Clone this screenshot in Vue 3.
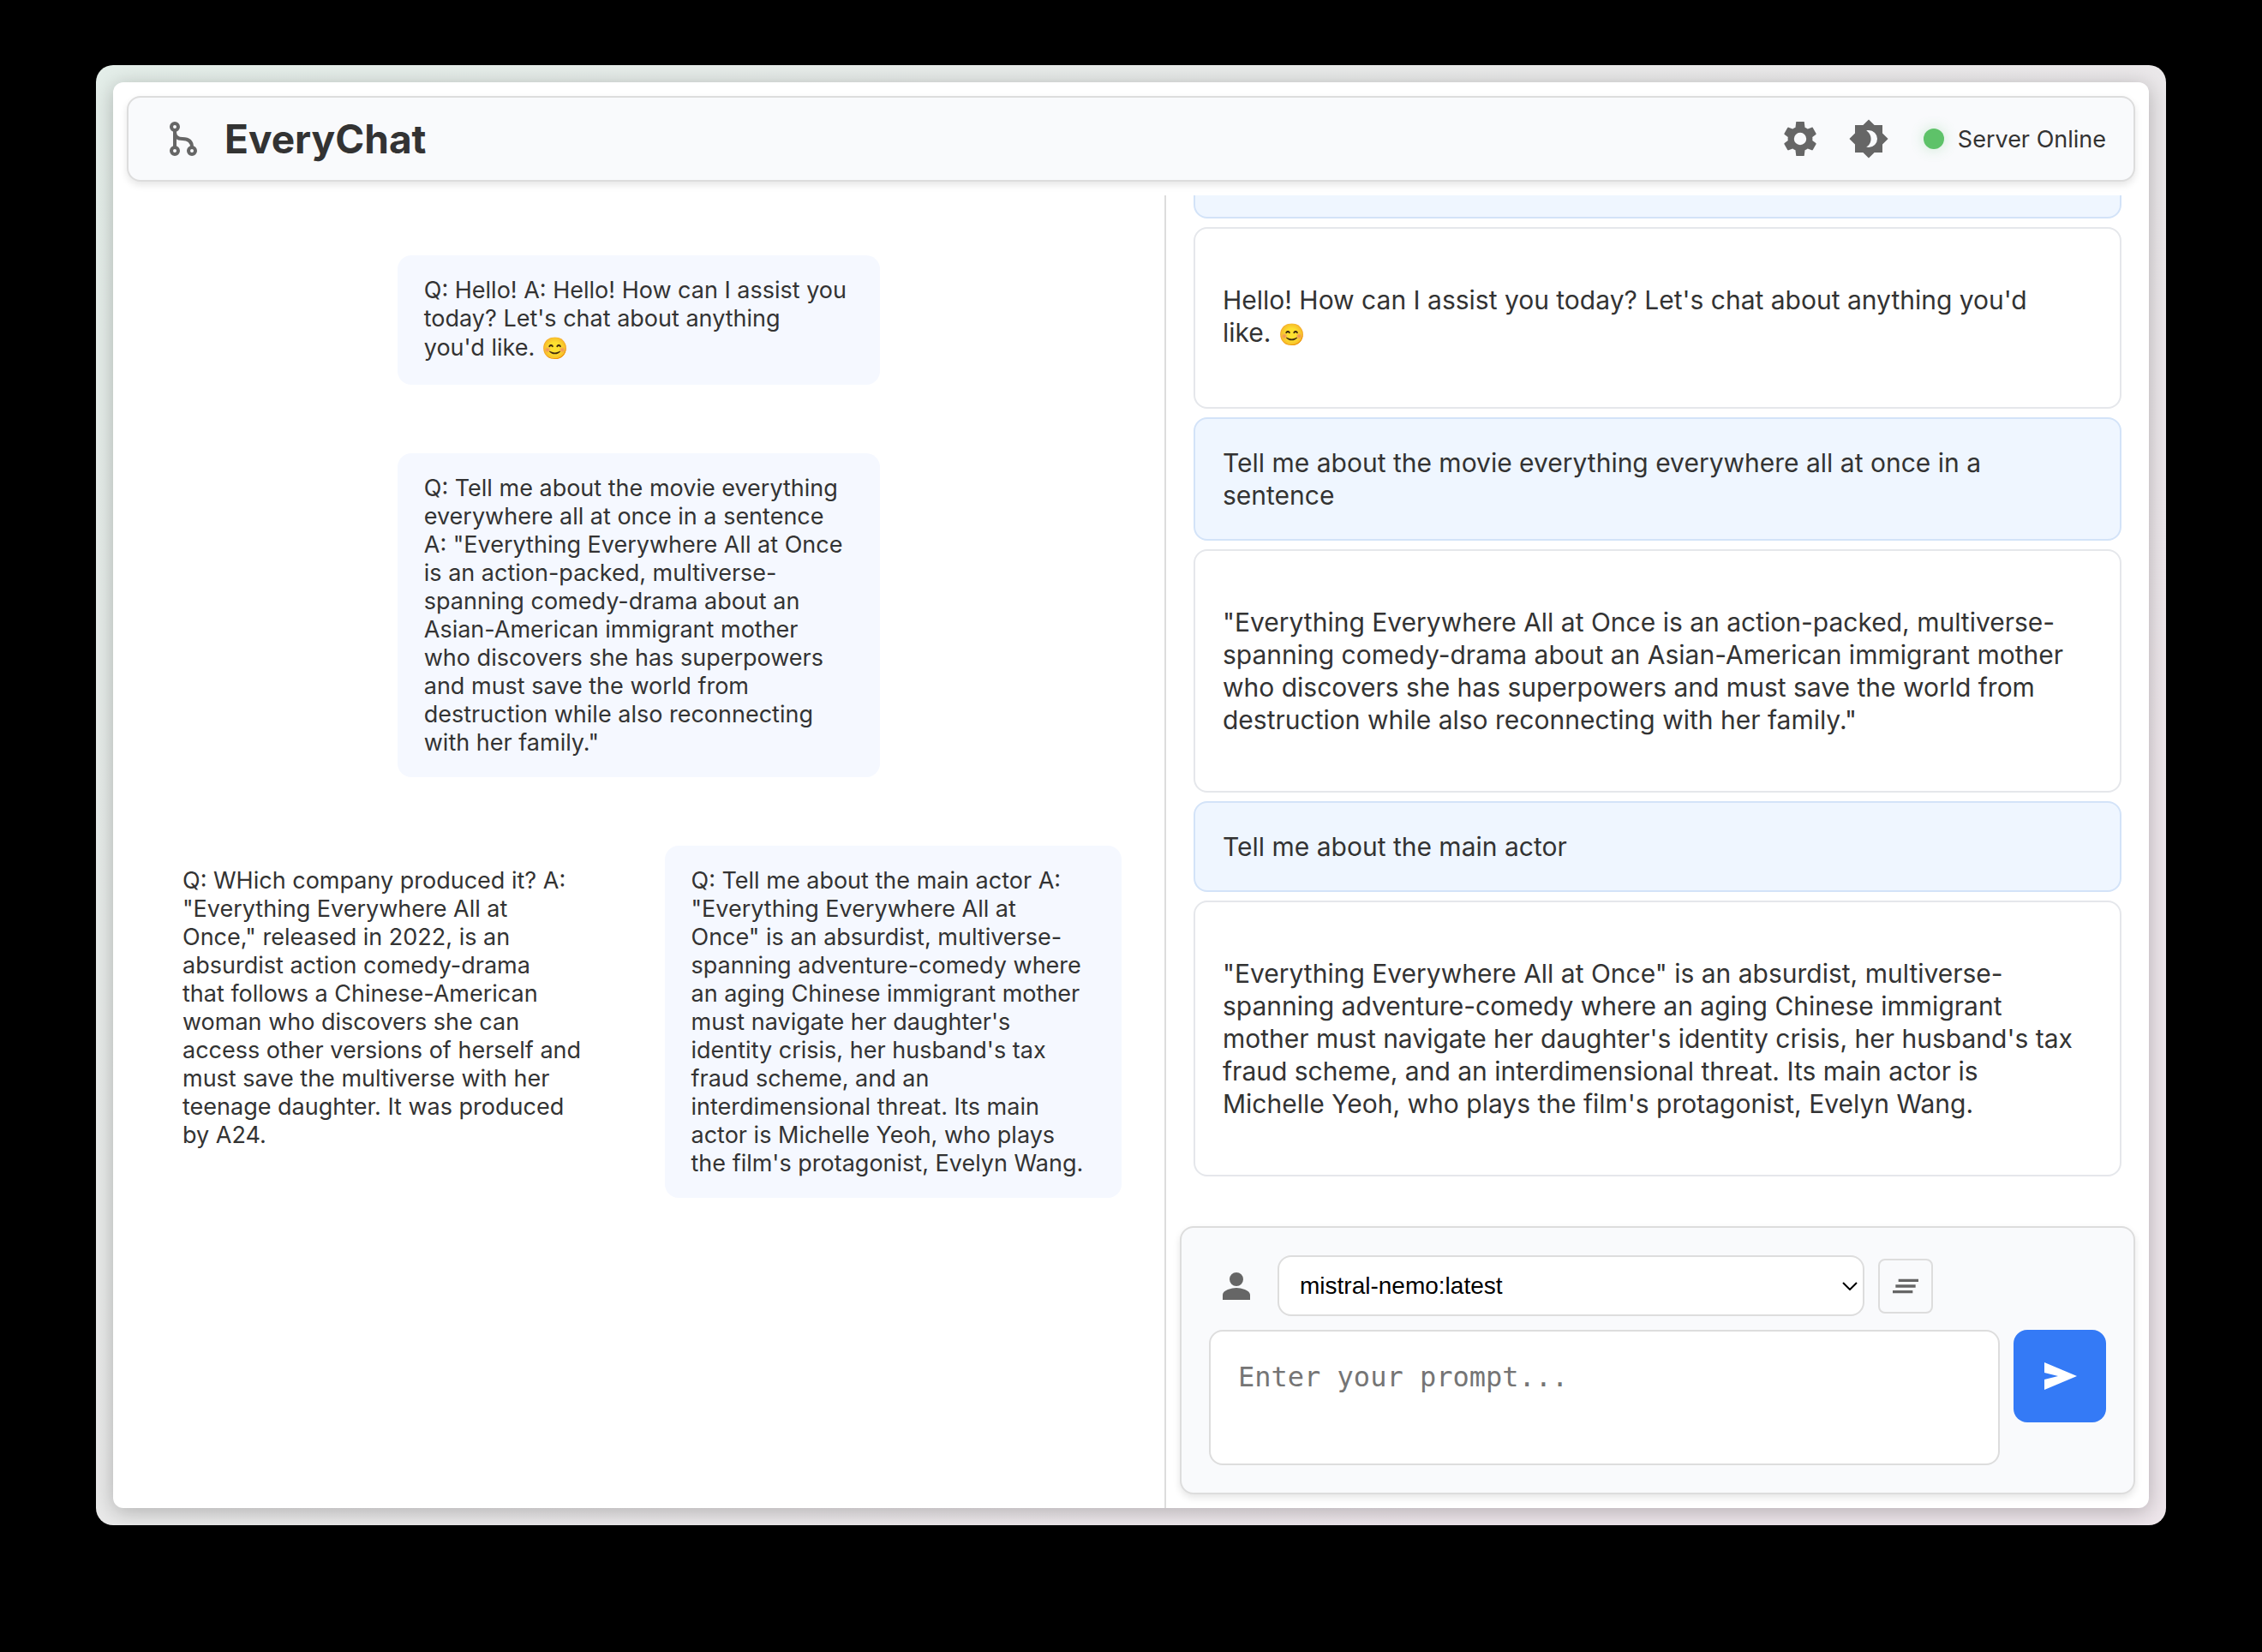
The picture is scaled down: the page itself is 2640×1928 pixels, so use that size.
<script setup>
import { ref } from 'vue'

const model = ref('mistral-nemo:latest')
const prompt = ref('')

const helloNode = `Q: Hello! A: Hello! How can I assist you
today? Let's chat about anything
you'd like. `

const movieNode = `Q: Tell me about the movie everything
everywhere all at once in a sentence
A: "Everything Everywhere All at Once
is an action-packed, multiverse-
spanning comedy-drama about an
Asian-American immigrant mother
who discovers she has superpowers
and must save the world from
destruction while also reconnecting
with her family."`

const companyNode = `Q: WHich company produced it? A:
"Everything Everywhere All at
Once," released in 2022, is an
absurdist action comedy-drama
that follows a Chinese-American
woman who discovers she can
access other versions of herself and
must save the multiverse with her
teenage daughter. It was produced
by A24.`

const actorNode = `Q: Tell me about the main actor A:
"Everything Everywhere All at
Once" is an absurdist, multiverse-
spanning adventure-comedy where
an aging Chinese immigrant mother
must navigate her daughter's
identity crisis, her husband's tax
fraud scheme, and an
interdimensional threat. Its main
actor is Michelle Yeoh, who plays
the film's protagonist, Evelyn Wang.`

const messages = [
  { role: 'user', text: 'Hello!' },
  {
    role: 'bot',
    text: `Hello! How can I assist you today? Let's chat about anything you'd
like. `,
    emoji: '😊',
  },
  {
    role: 'user',
    text: `Tell me about the movie everything everywhere all at once in a
sentence`,
  },
  {
    role: 'bot',
    text: `"Everything Everywhere All at Once is an action-packed, multiverse-
spanning comedy-drama about an Asian-American immigrant mother
who discovers she has superpowers and must save the world from
destruction while also reconnecting with her family."`,
  },
  { role: 'user', text: 'Tell me about the main actor' },
  {
    role: 'bot',
    text: `"Everything Everywhere All at Once" is an absurdist, multiverse-
spanning adventure-comedy where an aging Chinese immigrant
mother must navigate her daughter's identity crisis, her husband's tax
fraud scheme, and an interdimensional threat. Its main actor is
Michelle Yeoh, who plays the film's protagonist, Evelyn Wang.`,
  },
]
</script>

<template>
  <div class="desktop">
    <div class="window">
      <div class="app">
        <header class="bar">
          <div class="group">
            <button class="icon-button" type="button" aria-label="Branches">
              <svg viewBox="0 0 48 48" fill="none" stroke="currentColor" stroke-width="4">
                <circle cx="14" cy="10" r="4" />
                <circle cx="14" cy="38" r="4" />
                <circle cx="34" cy="38" r="4" />
                <path d="M14 14v20M14 16c0 6 4 8 9 8 7 0 11 3 11 10" />
              </svg>
            </button>
            <h1>EveryChat</h1>
          </div>
          <div class="group">
            <button class="icon-button" type="button" aria-label="Settings">
              <svg viewBox="0 0 24 24" fill="currentColor">
                <path d="M19.14 12.94c.04-.3.06-.61.06-.94 0-.32-.02-.64-.07-.94l2.03-1.58c.18-.14.23-.41.12-.61l-1.92-3.32c-.12-.22-.37-.29-.59-.22l-2.39.96c-.5-.38-1.03-.7-1.62-.94L14.4 2.2c-.04-.1-.1-.2-.2-.2H9.800c-.1 0-.2.1-.2.2L9.25 5.35c-.59.24-1.13.57-1.62.94l-2.39-.96c-.22-.08-.47 0-.59.22L2.74 8.87c-.12.21-.08.47.12.61l2.03 1.58c-.05.3-.09.63-.09.94s.02.64.07.94l-2.03 1.58c-.18.14-.23.41-.12.61l1.92 3.32c.12.22.37.29.59.22l2.39-.96c.5.38 1.03.7 1.62.94l.36 3.130c0 .1.1.2.2.2h4.400c.1 0 .2-.1.2-.2l.36-3.130c.59-.24 1.13-.56 1.62-.94l2.39.96c.22.08.47 0 .59-.22l1.92-3.32c.12-.22.07-.47-.12-.61l-2.01-1.58zM12 15.600A3.600 3.600 0 1 1 12 8.400a3.600 3.600 0 0 1 0 7.200z" />
              </svg>
            </button>
            <button class="icon-button" type="button" aria-label="Toggle theme">
              <svg viewBox="0 0 24 24" fill="currentColor">
                <path d="M20 8.69V4h-4.69L12 .69 8.69 4H4v4.69L.69 12 4 15.31V20h4.69L12 23.31 15.31 20H20v-4.69L23.31 12 20 8.69zM12 17c-.5 0-1-.1-1.4-.2 1.600-.9 2.700-2.700 2.700-4.800s-1.100-3.900-2.700-4.800C11 7.100 11.500 7 12 7a5 5 0 0 1 0 10z" />
              </svg>
            </button>
            <p class="status"><span class="dot"></span>Server Online</p>
          </div>
        </header>

        <main class="content">
          <section class="tree">
            <article class="node active root">{{ helloNode }}<span class="emoji">😊</span></article>
            <article class="node active root">{{ movieNode }}</article>
            <div class="branches">
              <article class="node">{{ companyNode }}</article>
              <article class="node active">{{ actorNode }}</article>
            </div>
          </section>

          <section class="chat">
            <div class="messages">
              <article v-for="(m, i) in messages" :key="i" class="message" :class="m.role">
                <p>{{ m.text }}<span v-if="m.emoji" class="emoji">{{ m.emoji }}</span></p>
              </article>
            </div>

            <form class="composer" @submit.prevent>
              <div class="row tools">
                <button class="icon-button" type="button" aria-label="System prompt">
                  <svg viewBox="0 0 24 24" fill="currentColor">
                    <path d="M12 12a4 4 0 1 0 0-8 4 4 0 0 0 0 8zm0 1c-2.670 0-8 1.340-8 4v3h16v-3c0-2.660-5.330-4-8-4z" />
                  </svg>
                </button>
                <div class="picker">
                  <select v-model="model" aria-label="Model">
                    <option>mistral-nemo:latest</option>
                  </select>
                  <svg viewBox="0 0 18 10" fill="none" stroke="currentColor" stroke-width="2">
                    <path d="M1 1l8 8 8-8" />
                  </svg>
                </div>
                <button class="clear" type="button" aria-label="Clear conversation">
                  <svg viewBox="0 0 24 24" fill="currentColor">
                    <path d="M5 13h14v-2H5v2zm-2 4h14v-2H3v2zM7 7v2h14V7H7z" />
                  </svg>
                </button>
              </div>
              <div class="row">
                <textarea v-model="prompt" aria-label="Prompt" placeholder="Enter your prompt..."></textarea>
                <button class="send" type="submit" aria-label="Send">
                  <svg viewBox="0 0 24 24" fill="currentColor">
                    <path d="M3 20v-6l8-2-8-2V4l19 8z" />
                  </svg>
                </button>
              </div>
            </form>
          </section>
        </main>
      </div>
    </div>
  </div>
</template>

<style>
body {
  margin: 0;
  background: #000;
}
</style>

<style scoped>
* {
  box-sizing: border-box;
}

.desktop {
  display: flex;
  min-height: 100vh;
  padding: 76px 112px 148px;
  background: #000;
  color: #333;
  font-family: Inter, "Noto Sans", sans-serif;
}

.window {
  display: flex;
  flex: 1;
  min-width: 0;
  padding: 20px;
  border-radius: 20px;
  background: linear-gradient(135deg, #e4eee9 0%, #e9e9e9 42%, #ebe8ea 60%, #eee6eb 80%);
}

.app {
  display: flex;
  flex: 1;
  flex-direction: column;
  min-width: 0;
  border-radius: 12px;
  background: #fff;
  box-shadow: 0 4px 24px rgba(0, 0, 0, 0.25);
  overflow: hidden;
}

.bar {
  display: flex;
  align-items: center;
  justify-content: space-between;
  margin: 16px;
  padding: 16px 32px;
  border: 2px solid #ddd;
  border-radius: 16px;
  background: #f9fafc;
  box-shadow: 0 4px 8px rgba(0, 0, 0, 0.1);
}

.group {
  display: flex;
  align-items: center;
  gap: 16px;
}

h1 {
  margin: 0;
  font-size: 46px;
  line-height: 64px;
}

button {
  display: flex;
  align-items: center;
  justify-content: center;
  flex: none;
  margin: 0;
  padding: 0;
  border: none;
  background: none;
  color: #666;
}

svg {
  display: block;
}

.icon-button {
  width: 64px;
  height: 64px;
}

.icon-button svg,
.send svg {
  width: 48px;
  height: 48px;
}

.status {
  display: flex;
  align-items: center;
  gap: 16px;
  margin: 0 0 0 16px;
  font-size: 27px;
  line-height: 33px;
}

.dot {
  width: 24px;
  height: 24px;
  border-radius: 50%;
  background: #5ec269;
  box-shadow: 0 0 16px rgba(94, 194, 105, 0.3);
}

.content {
  display: grid;
  flex: 1;
  grid-template-columns: minmax(0, 1227fr) minmax(0, 1149fr);
  min-height: 0;
}

.tree {
  display: flex;
  flex-direction: column;
  align-items: center;
  gap: 80px;
  padding: 70px 50px;
}

.node {
  padding: 24px 31px;
  border-radius: 16px;
  font-size: 27px;
  line-height: 33px;
  white-space: pre-line;
}

.root {
  width: 50%;
}

.active {
  background: #f5f8ff;
}

.branches {
  display: grid;
  grid-template-columns: 1fr 1fr;
  gap: 60px;
  width: 100%;
}

.chat {
  display: flex;
  flex-direction: column;
  border-left: 2px solid #ddd;
}

.messages {
  display: flex;
  flex: 1 1 0;
  flex-direction: column;
  justify-content: flex-end;
  gap: 10px;
  min-height: 0;
  padding: 0 32px 58px;
  overflow: hidden;
}

.message {
  flex: none;
  padding: 32px;
  border: 2px solid #e5e7eb;
  border-radius: 16px;
  font-size: 30px;
  line-height: 38px;
}

.message p {
  margin: 0;
  white-space: pre-line;
}

.user {
  border-color: #d3e3f8;
  background: #eff6ff;
}

.message.bot p {
  margin: 32px 0;
}

.emoji {
  font-size: 25px;
  line-height: 37px;
}

.message .emoji {
  line-height: 42px;
}

.composer {
  display: flex;
  flex-direction: column;
  gap: 16px;
  margin: 0 16px 16px;
  padding: 32px;
  border: 2px solid #ddd;
  border-radius: 16px;
  background: #f9fafc;
  box-shadow: 0 4px 8px rgba(0, 0, 0, 0.1);
}

.row {
  display: flex;
  align-items: flex-start;
  gap: 16px;
}

.tools {
  align-items: center;
}

.picker {
  position: relative;
  flex: 0 1 685px;
}

.picker svg {
  position: absolute;
  top: 31px;
  right: 8px;
  width: 18px;
  height: 10px;
  color: #000;
  pointer-events: none;
}

select {
  display: block;
  width: 100%;
  height: 71px;
  padding: 0 48px 0 24px;
  border: 2px solid #ddd;
  border-radius: 16px;
  background: #fff;
  color: #000;
  font-family: "Liberation Sans", Arial, sans-serif;
  font-size: 28px;
  appearance: none;
}

.clear {
  width: 64px;
  height: 64px;
  border: 2px solid #ddd;
  border-radius: 8px;
}

.clear svg {
  width: 40px;
  height: 40px;
}

textarea {
  display: block;
  flex: 1;
  min-width: 0;
  height: 158px;
  padding: 32px;
  border: 2px solid #ddd;
  border-radius: 16px;
  background: #fff;
  font-family: "DejaVu Sans Mono", monospace;
  font-size: 32px;
  line-height: 42px;
  resize: none;
}

textarea::placeholder {
  color: #757575;
}

.send {
  width: 108px;
  height: 108px;
  border-radius: 16px;
  background: #347af6;
  color: #fff;
}
</style>
